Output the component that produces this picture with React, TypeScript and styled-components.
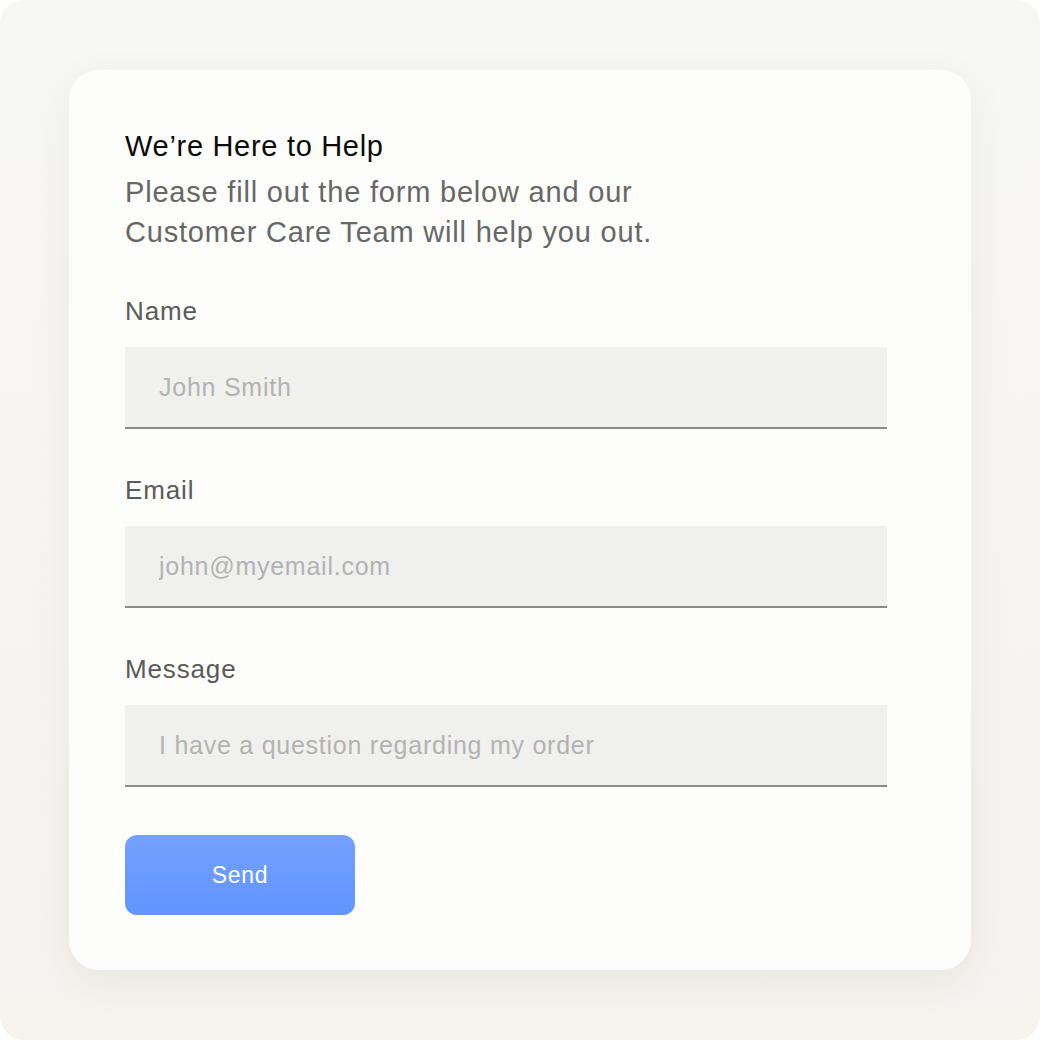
import React from 'react'
import styled, { createGlobalStyle } from 'styled-components'

const GlobalStyle = createGlobalStyle`
  html, body {
    margin: 0;
    padding: 0;
    background: #ffffff;
  }
  body {
    font-family: "Liberation Sans", Arial, sans-serif;
  }
`

const Frame = styled.div`
  width: 1040px;
  height: 1040px;
  box-sizing: border-box;
  border-radius: 24px;
  background: linear-gradient(180deg, #f7f7f6 0%, #f6f3ef 100%);
  display: flex;
  align-items: center;
  justify-content: center;
`

const Card = styled.div`
  width: 902px;
  height: 900px;
  box-sizing: border-box;
  padding: 56px 84px 56px 56px;
  background: #fdfdfb;
  border-radius: 30px;
  box-shadow: 0 12px 40px rgba(60, 50, 30, 0.07);
  display: flex;
  flex-direction: column;
`

const Heading = styled.h1`
  margin: 0;
  font-size: 29px;
  line-height: 40px;
  letter-spacing: 0.7px;
  font-weight: 400;
  color: #0a0a0a;
`

const Intro = styled.p`
  margin: 6px 0 0;
  font-size: 29px;
  line-height: 40px;
  letter-spacing: 0.8px;
  color: #676767;
`

const Form = styled.form`
  display: flex;
  flex-direction: column;
  margin-top: 44px;
`

const Field = styled.label`
  display: flex;
  flex-direction: column;
  gap: 21px;
  margin-bottom: 46px;
  &:last-of-type {
    margin-bottom: 48px;
  }
`

const Label = styled.span`
  font-size: 26px;
  line-height: 30px;
  letter-spacing: 0.85px;
  color: #5a5a5a;
`

const Input = styled.input`
  width: 762px;
  height: 82px;
  box-sizing: border-box;
  border: none;
  border-bottom: 2px solid #8a8a8a;
  background: #f0f0ef;
  padding: 0 34px;
  font-family: inherit;
  font-size: 25px;
  letter-spacing: 0.75px;
  color: #333;
  outline: none;
  &::placeholder {
    color: #b3b3b3;
  }
`

const SendButton = styled.button`
  width: 230px;
  height: 80px;
  border: none;
  border-radius: 12px;
  background: linear-gradient(180deg, #74a1ff 0%, #6194ff 100%);
  color: #ffffff;
  font-family: inherit;
  font-size: 23px;
  letter-spacing: 0.7px;
  cursor: pointer;
`

const fields = [
  { label: 'Name', placeholder: 'John Smith', type: 'text' },
  { label: 'Email', placeholder: 'john@myemail.com', type: 'email' },
  { label: 'Message', placeholder: 'I have a question regarding my order', type: 'text' },
]

export default function App() {
  return (
    <>
      <GlobalStyle />
      <Frame>
        <Card>
          <Heading>We’re Here to Help</Heading>
          <Intro>
            Please fill out the form below and our
            <br />
            Customer Care Team will help you out.
          </Intro>
          <Form onSubmit={e => e.preventDefault()}>
            {fields.map(f => (
              <Field key={f.label}>
                <Label>{f.label}</Label>
                <Input type={f.type} placeholder={f.placeholder} />
              </Field>
            ))}
            <SendButton type="submit">Send</SendButton>
          </Form>
        </Card>
      </Frame>
    </>
  )
}
